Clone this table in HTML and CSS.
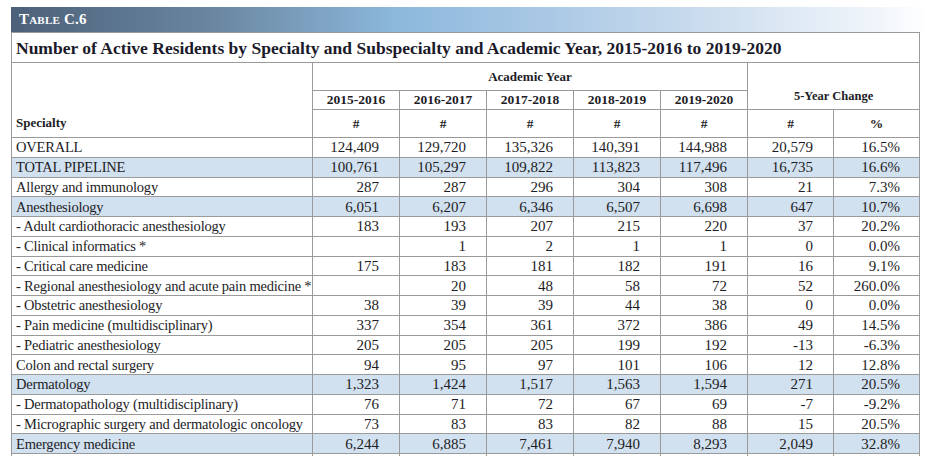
FILE: index.html
```html
<!DOCTYPE html>
<html>
<head>
<meta charset="utf-8">
<link rel="stylesheet" href="styles.css">
</head>
<body>
<div class="page">
  <div class="bar"><span class="tag">Table C.6</span></div>
  <table class="tbl">
    <colgroup>
      <col class="c-spec"><col class="c-yr"><col class="c-yr"><col class="c-yr"><col class="c-yr"><col class="c-yr"><col class="c-chg"><col class="c-chg">
    </colgroup>
    <thead>
      <tr class="title"><th colspan="8">Number of Active Residents by Specialty and Subspecialty and Academic Year, 2015-2016 to 2019-2020</th></tr>
      <tr class="h1">
        <th rowspan="3" class="spec">Specialty</th>
        <th colspan="5" class="ay">Academic Year</th>
        <th colspan="2" rowspan="2" class="chg">5-Year Change</th>
      </tr>
      <tr class="h2">
        <th>2015-2016</th><th>2016-2017</th><th>2017-2018</th><th>2018-2019</th><th>2019-2020</th>
      </tr>
      <tr class="h3">
        <th>#</th><th>#</th><th>#</th><th>#</th><th>#</th><th>#</th><th>%</th>
      </tr>
    </thead>
    <tbody>
      <tr><td>OVERALL</td><td>124,409</td><td>129,720</td><td>135,326</td><td>140,391</td><td>144,988</td><td>20,579</td><td>16.5%</td></tr>
      <tr class="hl"><td>TOTAL PIPELINE</td><td>100,761</td><td>105,297</td><td>109,822</td><td>113,823</td><td>117,496</td><td>16,735</td><td>16.6%</td></tr>
      <tr><td>Allergy and immunology</td><td>287</td><td>287</td><td>296</td><td>304</td><td>308</td><td>21</td><td>7.3%</td></tr>
      <tr class="hl"><td>Anesthesiology</td><td>6,051</td><td>6,207</td><td>6,346</td><td>6,507</td><td>6,698</td><td>647</td><td>10.7%</td></tr>
      <tr><td>- Adult cardiothoracic anesthesiology</td><td>183</td><td>193</td><td>207</td><td>215</td><td>220</td><td>37</td><td>20.2%</td></tr>
      <tr><td>- Clinical informatics *</td><td></td><td>1</td><td>2</td><td>1</td><td>1</td><td>0</td><td>0.0%</td></tr>
      <tr><td>- Critical care medicine</td><td>175</td><td>183</td><td>181</td><td>182</td><td>191</td><td>16</td><td>9.1%</td></tr>
      <tr><td>- Regional anesthesiology and acute pain medicine *</td><td></td><td>20</td><td>48</td><td>58</td><td>72</td><td>52</td><td>260.0%</td></tr>
      <tr><td>- Obstetric anesthesiology</td><td>38</td><td>39</td><td>39</td><td>44</td><td>38</td><td>0</td><td>0.0%</td></tr>
      <tr><td>- Pain medicine (multidisciplinary)</td><td>337</td><td>354</td><td>361</td><td>372</td><td>386</td><td>49</td><td>14.5%</td></tr>
      <tr><td>- Pediatric anesthesiology</td><td>205</td><td>205</td><td>205</td><td>199</td><td>192</td><td>-13</td><td>-6.3%</td></tr>
      <tr><td>Colon and rectal surgery</td><td>94</td><td>95</td><td>97</td><td>101</td><td>106</td><td>12</td><td>12.8%</td></tr>
      <tr class="hl"><td>Dermatology</td><td>1,323</td><td>1,424</td><td>1,517</td><td>1,563</td><td>1,594</td><td>271</td><td>20.5%</td></tr>
      <tr><td>- Dermatopathology (multidisciplinary)</td><td>76</td><td>71</td><td>72</td><td>67</td><td>69</td><td>-7</td><td>-9.2%</td></tr>
      <tr><td>- Micrographic surgery and dermatologic oncology</td><td>73</td><td>83</td><td>83</td><td>82</td><td>88</td><td>15</td><td>20.5%</td></tr>
      <tr class="hl"><td>Emergency medicine</td><td>6,244</td><td>6,885</td><td>7,461</td><td>7,940</td><td>8,293</td><td>2,049</td><td>32.8%</td></tr>
      <tr><td>&nbsp;</td><td></td><td></td><td></td><td></td><td></td><td></td><td></td></tr>
    </tbody>
  </table>
</div>
</body>
</html>
```
FILE: styles.css
```css
html, body {
  margin: 0;
  padding: 0;
  background: #ffffff;
}
body {
  font-family: "Liberation Serif", "Times New Roman", serif;
  color: #1d1d26;
  overflow: hidden;
}
.page {
  padding: 7px 0 0 11px;
}
.bar {
  height: 25px;
  background: linear-gradient(to right, #4c6179 0%, #6a86a0 22%, #8cb8dc 42%, #a9c8e5 58%, #cfdfef 78%, #f2f6fb 95%, #ffffff 100%);
  display: flex;
  align-items: center;
  padding-left: 8px;
}
.tag {
  color: #ffffff;
  font-weight: bold;
  font-variant: small-caps;
  font-size: 15px;
  letter-spacing: 0.2px;
}
.tbl {
  border-collapse: collapse;
  table-layout: fixed;
  width: 908px;
}
.c-spec { width: 301px; }
.c-yr { width: 87px; }
.c-chg { width: 86px; }
.tbl th, .tbl td {
  border: 1px solid #9a9a9a;
  padding: 0;
}
.title th {
  height: 28px;
  text-align: left;
  font-weight: bold;
  padding-left: 4px;
  padding-top: 1px;
  color: #1b1a2a;
  white-space: nowrap;
}
.h1 th { height: 27px; }
.h2 th { height: 18px; }
.h3 th { height: 27px; }
.tbl thead th {
  font-weight: bold;
  font-size: 13.5px;
}
.tbl thead .title th { font-size: 17.5px; }
.spec {
  text-align: left;
  vertical-align: bottom;
  padding: 0 0 6px 4px !important;
}
.tbl thead th.spec { font-size: 13px; }
.tbl thead th.ay { font-size: 13px; }
.chg {
  vertical-align: bottom;
  padding-bottom: 5px !important;
}
.tbl thead th.chg { font-size: 12.5px; }
.tbl tbody tr { height: 19.75px; }
.tbl tbody td {
  font-size: 15px;
  line-height: 17px;
  padding-top: 1px;
  text-align: right;
  padding-right: 20px;
  white-space: nowrap;
}
.tbl tbody td:first-child {
  text-align: left;
  padding-left: 4px;
  padding-right: 0;
  font-size: 14.5px;
  letter-spacing: -0.2px;
}
.tbl tbody td:last-child { padding-right: 19px; }
.hl td { background: #d2e1ef; }
```
